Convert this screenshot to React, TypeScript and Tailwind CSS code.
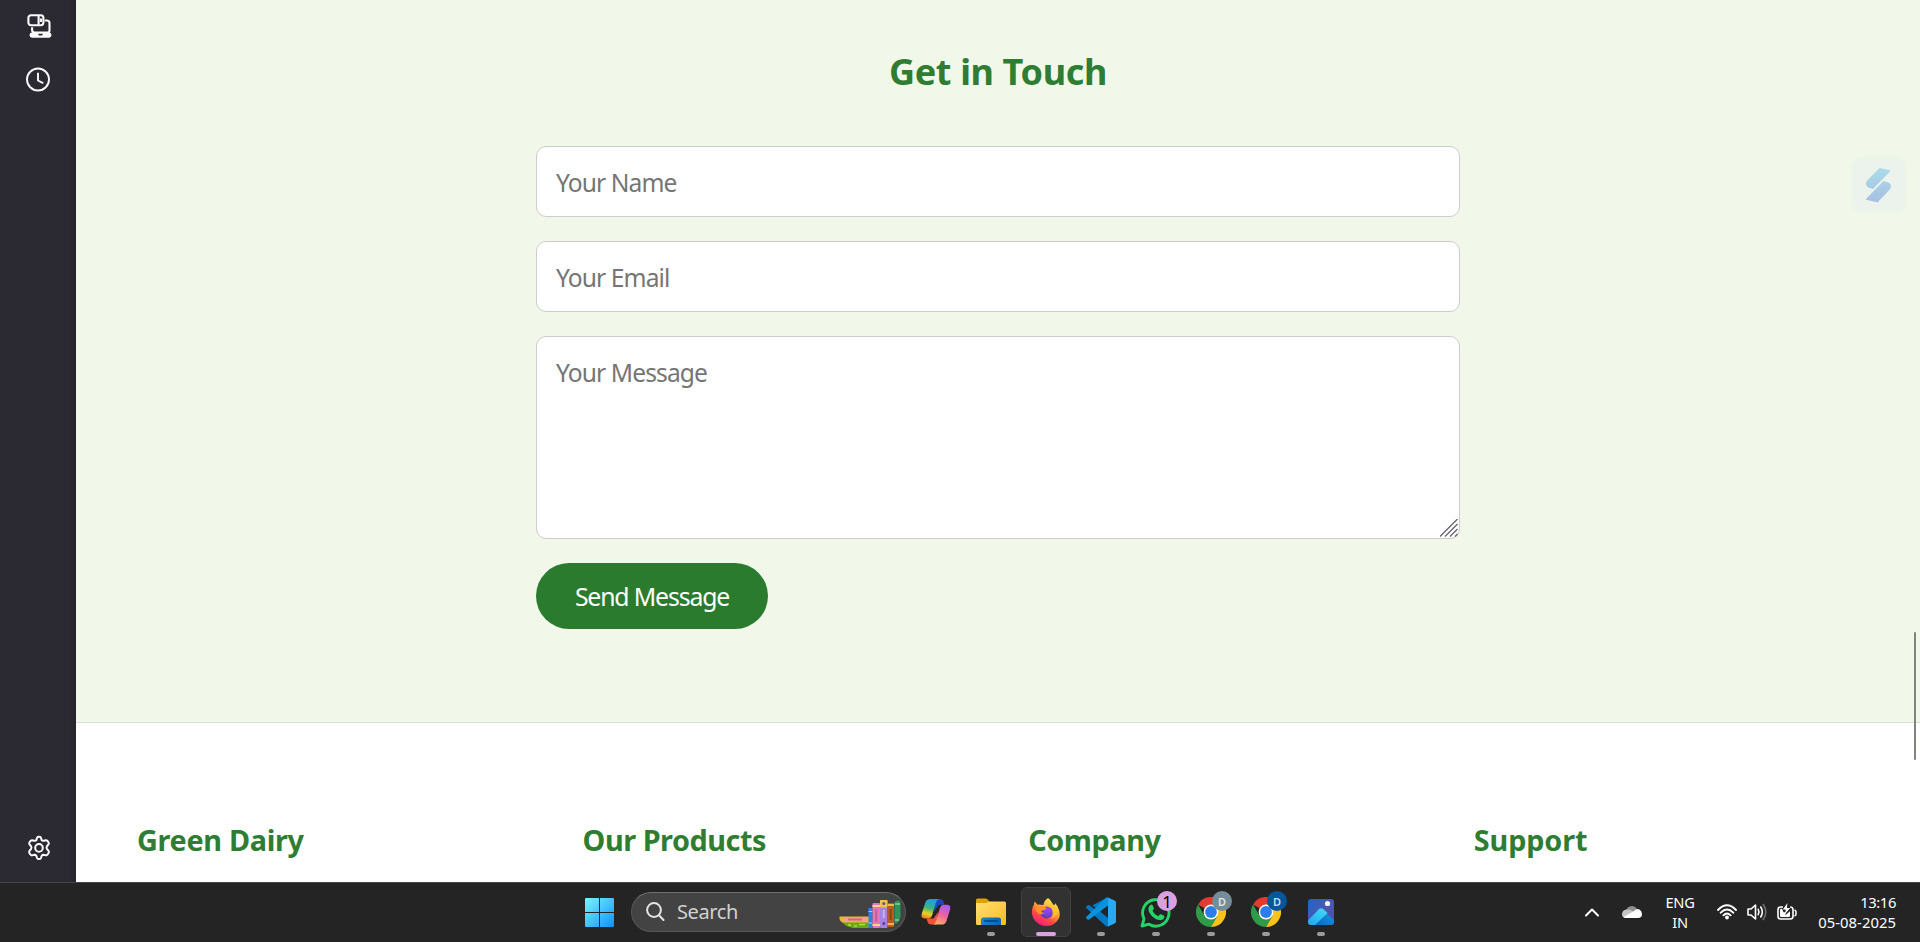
import React from "react";

const fieldBase =
  "block w-full rounded-[10px] border border-[#cccccc] bg-white px-[19px] text-[24.6px] tracking-[-0.9px] text-[#333] outline-none placeholder:text-[#757575] placeholder:opacity-100";

function DevicesIcon() {
  return (
    <svg width="26" height="26" viewBox="0 0 26 26" fill="none" stroke="#fbfbfe" strokeWidth="2.1">
      <rect x="2.4" y="2.2" width="15" height="10" rx="2.6" />
      <path d="M12.6 2v9.8M15 5.500v3.500" />
      <path d="M18.800 7.500h2.300a2.400 2.400 0 0 1 2.400 2.400v7.600a2 2 0 0 1-2 2H8.400a2.400 2.400 0 0 1-2.300-2.400v-2.900" />
      <rect x="3.600" y="19.500" width="21.800" height="5.200" rx="2.400" fill="#fbfbfe" stroke="none" />
      <path d="M12 20.700h5l-1 1.700h-3z" fill="#2b2a33" stroke="none" />
    </svg>
  );
}

function ClockIcon() {
  return (
    <svg width="26" height="26" viewBox="0 0 26 26" fill="none" stroke="#fbfbfe" strokeWidth="1.9" strokeLinecap="round" strokeLinejoin="round">
      <circle cx="13" cy="13.500" r="11" />
      <path d="M13 7.500v7l4.600 2.300" />
    </svg>
  );
}

function GearIcon() {
  return (
    <svg width="26" height="26" viewBox="0 0 26 26" fill="none" stroke="#fbfbfe" strokeWidth="2" strokeLinejoin="round">
      <path d="M11.1 2.7Q11.5 1.8 13 1.8T14.9 2.7L15.7 5.1Q16.4 6 17.7 5.7L20 5.2Q21.2 5.1 22.2 6.7T22.6 9.1L20.9 11.3Q20.2 12.5 20.9 13.8L22.8 16.2Q23.2 17.2 22.2 18.8T20 20.4L17.6 19.8Q16.4 19.7 15.7 20.7L14.9 23.1Q14.4 24.1 13 24.1T11.1 23.1L10.3 20.7Q9.6 19.7 8.4 19.8L6 20.4Q4.8 20.4 3.8 18.8T3.3 16.2L5.1 13.8Q5.8 12.5 5.1 11.3L3.4 9.1Q2.8 8.2 3.8 6.7T6 5.2L8.3 5.7Q9.6 6 10.3 5.1Z" />
      <circle cx="13" cy="12.9" r="3.8" />
    </svg>
  );
}

function WindowsLogo() {
  return (
    <svg width="29" height="29" viewBox="0 0 29 29">
      <defs>
        <linearGradient id="win" x1="0" y1="0" x2="1" y2="1">
          <stop offset="0" stopColor="#7df2ff" />
          <stop offset="1" stopColor="#0a94ff" />
        </linearGradient>
      </defs>
      <path fill="url(#win)" d="M1 0h13v14H0V1a1 1 0 0 1 1-1zM15 0h13a1 1 0 0 1 1 1v13H15zM0 15h14v14H1a1 1 0 0 1-1-1zM15 15h14v13a1 1 0 0 1-1 1H15z" />
    </svg>
  );
}

function BooksArt() {
  return (
    <svg width="62" height="30" viewBox="0 0 62 30">
      <path d="M.5 17.500H30V24H4Q0 22 .5 17.500z" fill="#e9b73e" />
      <rect x="5.500" y="18" width="22" height="5" rx="1.500" fill="#f39d95" />
      <rect x="9" y="19.500" width="14" height="2" fill="#c9706b" />
      <path d="M3.500 23.500H30V29H14Q6 27.500 3.500 23.500z" fill="#6aa81a" />
      <path d="M9 26h3m3 1h3m2-1.500h6" stroke="#b4db3c" strokeWidth="1.500" fill="none" />
      <rect x="29.500" y="9" width="4" height="20" fill="#2f7fe6" />
      <path d="M29.500 12.500h4M29.500 24h4" stroke="#9fd0ff" />
      <rect x="33.500" y="4" width="7.500" height="25" rx="1" fill="#e277b4" />
      <path d="M33.500 7h7.500M33.500 26h7.500" stroke="#f5d890" strokeWidth="2" />
      <path d="M37.200 10.500v12" stroke="#c25c9b" strokeWidth="2" />
      <rect x="41" y="1" width="7.500" height="28" rx="1" fill="#a583e3" />
      <rect x="41" y="1" width="7.500" height="7.500" rx="1" fill="#f2c344" />
      <circle cx="44.800" cy="4.500" r="1.500" fill="#6c46ad" />
      <path d="M43 24.500l1.800-2 1.800 2-1.800 2z" fill="#5e3aa3" />
      <path d="M44.800 11v8" stroke="#c9b0f5" strokeWidth="2" />
      <rect x="48.500" y="4" width="6.500" height="24" rx="1" fill="#b85c26" />
      <path d="M48.500 6h6.500M48.500 25h6.500" stroke="#efb850" strokeWidth="2" />
      <path d="M51.700 10v11" stroke="#8f411b" strokeWidth="2" />
      <path d="M55.500 3q5-3.500 6 1v14q-1 4-4 6.500h-2z" fill="#2f9556" />
      <path d="M56 5h5M56 21h4" stroke="#85d399" strokeWidth="1.500" />
    </svg>
  );
}

function CopilotIcon() {
  return (
    <svg width="30" height="28" viewBox="0 0 30 28">
      <defs>
        <linearGradient id="cpA" x1="0.5" y1="0" x2="0.25" y2="1">
          <stop offset="0" stopColor="#1a9df0" />
          <stop offset=".45" stopColor="#3fb37a" />
          <stop offset=".75" stopColor="#e8d221" />
          <stop offset="1" stopColor="#f47a24" />
        </linearGradient>
        <linearGradient id="cpB" x1="0.7" y1="0" x2="0.3" y2="1">
          <stop offset="0" stopColor="#a95cf0" />
          <stop offset=".5" stopColor="#ee629f" />
          <stop offset="1" stopColor="#ffad62" />
        </linearGradient>
      </defs>
      <path d="M15 1h4.500q2.200 0 3 2.400l1 3.300H18l-5 7z" fill="#1749c4" />
      <path d="M15 26.500h-5q-2.600 0-3.400-2.500l-1-3.600h7L17 14z" fill="#f5503e" />
      <path d="M9.500 1H18q-2 .4-2.800 3l-4 13q-1 3.400-4 3.400H4q-4.600 0-3.200-5L4.300 4.600Q5.500 1 9.500 1z" fill="url(#cpA)" />
      <path d="M20.500 26.500H12q2-.4 2.800-3l4-13q1-3.800 4-3.800h3q4.600 0 3.200 5l-3.500 11.200q-1.200 3.600-5 3.600z" fill="url(#cpB)" />
    </svg>
  );
}

function FolderIcon() {
  return (
    <svg width="30" height="28" viewBox="0 0 30 28">
      <defs>
        <linearGradient id="fold" x1="0" y1="0" x2="1" y2="1">
          <stop offset="0" stopColor="#ffdf75" />
          <stop offset="1" stopColor="#fcbb20" />
        </linearGradient>
        <linearGradient id="tray" x1="0" y1="0" x2="1" y2="0">
          <stop offset="0" stopColor="#1685d5" />
          <stop offset="1" stopColor="#0a65b4" />
        </linearGradient>
      </defs>
      <path d="M0 2q0-1.500 1.500-1.500h8q1 0 1.800.7L13.500 3.500V7H0z" fill="#dea008" />
      <path d="M0 5h10l3.500-1.500h15q1.500 0 1.500 1.500v20.500q0 1.500-1.500 1.500h-27Q0 27 0 25.500z" fill="url(#fold)" />
      <path d="M5 27v-5q0-2.500 2.500-2.500h15Q25 19.500 25 22v5z" fill="url(#tray)" />
      <path d="M8.500 23h13" stroke="#063f78" strokeWidth="1.300" strokeLinecap="round" />
    </svg>
  );
}

function FirefoxIcon() {
  return (
    <svg width="30" height="30" viewBox="0 0 30 30">
      <defs>
        <linearGradient id="ffA" x1=".8" y1="0" x2=".25" y2="1">
          <stop offset="0" stopColor="#fff44f" />
          <stop offset=".4" stopColor="#ffb02e" />
          <stop offset=".68" stopColor="#ff4b43" />
          <stop offset="1" stopColor="#ee1586" />
        </linearGradient>
        <radialGradient id="ffB" cx=".6" cy=".3" r=".8">
          <stop offset="0" stopColor="#a445ee" />
          <stop offset="1" stopColor="#493bc2" />
        </radialGradient>
      </defs>
      <path d="M17 1q3 2 4.500 5.500 1 1.700 1.700 1.500Q24.500 7.500 24 6q3 3 4.200 7.400Q30 20 25.500 24.800 21 29.500 14.400 29 7.500 28.500 3.500 23 .2 18.200 1 13q.5-3.300 2-5.500Q3 6 3.800 4.600L6.500 7.800q1.500-.6 3.300-.1 1.600.4 2.600.4Q13 3.500 17 1z" fill="url(#ffA)" />
      <circle cx="15.500" cy="15.500" r="6.100" fill="url(#ffB)" />
      <path d="M4.500 10.500q3.500-3 8.500-.8l2.500 1.500q-.7 2-3 2.100-2.300.3-2.500 1.500 1.500 1.600 4 .7-2.500 2.600-6 1.300Q4.700 15 4.500 10.500z" fill="#ff9428" />
      <path d="M16 8.500q7 1 6.500 8.500 0 3-3 5 6-1.500 6.300-7.500Q24.500 8.500 19 7z" fill="#ffc52f" opacity=".8" />
    </svg>
  );
}

function VsCodeIcon() {
  return (
    <svg width="30" height="30" viewBox="0 0 30 30">
      <path d="M21.800.3 8.700 12.300 3.300 8.200q-.9-.6-1.700.1L.5 9.600q-.8.8 0 1.700L19.500 28.800q1.100 1.200 2.700.5L22 21 6.500 8.200z" fill="#0079c5" />
      <path d="M22 .4v8.200L3.300 22.500q-.9.700-1.800 0L.4 21.300q-.8-.9 0-1.600L19.700 1Q20.800-.1 22 .4z" fill="#0893dc" />
      <path d="M22 .4 28.600 3.500Q30 4.200 30 5.600v18.800q0 1.500-1.400 2.100L22 29.600z" fill="#28a9f2" />
    </svg>
  );
}

function WhatsAppIcon() {
  return (
    <svg width="31" height="31" viewBox="0 0 31 31">
      <path d="M2 29l2-7.200A13.200 13.200 0 1 1 9 27.200z" fill="none" stroke="#25d366" strokeWidth="2.900" strokeLinejoin="round" />
      <path d="M10.500 8q.9-.9 2 .1l1.300 2.800q.3.800-.3 1.500l-1.100 1.300q2 4 5.900 5.500l1.500-1.700q.6-.6 1.400-.2l2.700 1.400q.9.500.4 1.700-1.100 3-4.700 2.700-4.400-.5-8-4.400-3.400-3.800-3.200-7.100.1-2.300 2.100-3.600z" fill="#25d366" />
    </svg>
  );
}

function ChromeIcon() {
  return (
    <svg width="30" height="30" viewBox="0 0 30 30">
      <path d="M15 15 2 7.500A15 15 0 0 1 28 7.500H15z" fill="#e33b2e" />
      <path d="M15 15 8.500 18.750 2 7.500A15 15 0 0 0 15 30l6.500-11.250z" fill="#2d9b47" />
      <path d="M15 7.500h13A15 15 0 0 1 15 30l6.500-11.250z" fill="#fcc21b" />
      <circle cx="15" cy="15" r="7.400" fill="#fff" />
      <circle cx="15" cy="15" r="5.900" fill="#2b7de9" />
    </svg>
  );
}

function PhotosIcon() {
  return (
    <svg width="26" height="26" viewBox="0 0 26 26">
      <defs>
        <linearGradient id="phA" x1="0" y1="0" x2="1" y2="1">
          <stop offset="0" stopColor="#1769ca" />
          <stop offset=".5" stopColor="#4e57ae" />
          <stop offset="1" stopColor="#4b4fa8" />
        </linearGradient>
        <linearGradient id="phB" x1="0" y1="1" x2="1" y2="0">
          <stop offset="0" stopColor="#1fa5ec" />
          <stop offset="1" stopColor="#44dcfb" />
        </linearGradient>
        <linearGradient id="phD" x1="0" y1="1" x2="1" y2="0">
          <stop offset="0" stopColor="#0868bd" />
          <stop offset="1" stopColor="#1c98e6" />
        </linearGradient>
        <clipPath id="phC"><rect width="26" height="26" rx="3" /></clipPath>
      </defs>
      <g clipPath="url(#phC)">
        <rect width="26" height="26" fill="url(#phA)" />
        <path d="M14 10 26 21v5H5z" fill="url(#phD)" />
        <path d="M0 21.500 10.800 10.300q2.300-2 4.600 0L19.500 14 7 26H0z" fill="url(#phB)" />
        <circle cx="19.500" cy="4.500" r="2.600" fill="#f4f5ff" />
      </g>
    </svg>
  );
}

function AppSlot({ children, running = true }: { children: React.ReactNode; running?: boolean }) {
  return (
    <div className="relative flex h-[50px] w-[55px] items-center justify-center">
      {children}
      {running && <span className="absolute bottom-[1px] left-[24px] h-1 w-2 rounded-full bg-[#9b9b9b]" />}
    </div>
  );
}

function Badge({ children, tone }: { children: string; tone: string }) {
  return (
    <span className={`absolute top-1 left-[29px] flex size-5 items-center justify-center rounded-full ${tone}`}>
      {children}
    </span>
  );
}

function Taskbar() {
  return (
    <footer className="flex h-[60px] shrink-0 items-start border-t border-[#454545] bg-[#242424] pt-1 text-white">
      <div className="ml-[585px] flex h-[50px] items-center">
        <WindowsLogo />
        <div className="mt-[-1px] ml-[17px] flex h-10 w-[275px] items-center rounded-full border border-[#575757] border-t-[#707070] bg-[#434343] pr-1 pl-[14px]">
          <svg width="19" height="20" viewBox="0 0 19 20" fill="none" stroke="#e4e4e4" strokeWidth="2" strokeLinecap="round">
            <circle cx="8" cy="8" r="6.900" />
            <path d="M13 13.300l4.500 4.700" />
          </svg>
          <span className="mt-px ml-3 text-[20px] leading-6 tracking-[-0.4px] text-[#d2d2d2]">Search</span>
          <span className="mt-1 ml-auto"><BooksArt /></span>
        </div>
        <div className="ml-[2px] flex">
          <AppSlot running={false}><CopilotIcon /></AppSlot>
          <AppSlot><FolderIcon /></AppSlot>
          <div className="relative mx-[2.5px] flex size-[50px] items-center justify-center rounded-[6px] border border-[#414141] bg-[#323232]">
            <FirefoxIcon />
            <span className="absolute bottom-0 left-[14px] h-1 w-5 rounded-full bg-[#dda0e4]" />
          </div>
          <AppSlot><VsCodeIcon /></AppSlot>
          <AppSlot><WhatsAppIcon /><Badge tone="bg-[#dba0e4] text-black text-[17px] leading-none">1</Badge></AppSlot>
          <AppSlot><ChromeIcon /><Badge tone="bg-[#758d99] text-[#dce4e8] text-[11px] font-semibold leading-none">D</Badge></AppSlot>
          <AppSlot><ChromeIcon /><Badge tone="bg-[#07559b] text-[#c5dcf0] text-[11px] font-semibold leading-none">D</Badge></AppSlot>
          <AppSlot><PhotosIcon /></AppSlot>
        </div>
      </div>
      <div className="mr-6 ml-auto flex h-[50px] items-center">
        <svg width="14" height="9" viewBox="0 0 14 9" fill="none" stroke="#fff" strokeWidth="2" strokeLinecap="round" strokeLinejoin="round"><path d="M1 7.500l6-6 6 6" /></svg>
        <svg className="ml-[23px]" width="20" height="14" viewBox="0 0 20 14">
          <path d="M4 6a6 6 0 0 1 11-2L10 9z" fill="#8f8f8f" />
          <path d="M4.500 4.500q3.200-.4 5 1L14 8l-8 5H4Q0 13 0 9.200 0 5.200 4.500 4.500z" fill="#c4c4c4" />
          <path d="M1.500 12 12 6q2.500-3 5.500-1.500Q20 6 20 9.200q0 3.800-4 3.800H4q-1.500 0-2.500-1z" fill="#fff" />
        </svg>
        <div className="ml-[23px] w-[30px] text-center text-[14.6px] leading-5 tracking-[-0.2px]">ENG<br />IN</div>
        <svg className="ml-[22px]" width="20" height="16" viewBox="0 0 20 16" fill="none" stroke="#fff" strokeWidth="1.900" strokeLinecap="round">
          <path d="M1 6Q10-3.500 19 6M3.700 8.700Q10 2.300 16.300 8.700M6.400 11.300Q10 7.700 13.600 11.300" />
          <circle cx="10" cy="13.500" r="1.900" fill="#fff" stroke="none" />
        </svg>
        <svg className="ml-[10px]" width="20" height="18" viewBox="0 0 20 18" fill="none" stroke="#fff" strokeWidth="1.600" strokeLinecap="round" strokeLinejoin="round">
          <path d="M1 6h3l4.500-4v14L4 12H1zM11.200 6.300q1.600 2.700 0 5.400M13.800 4q3 5 0 10" />
          <path d="M16.300 1.500q5 7.500 0 15" stroke="#707070" />
        </svg>
        <svg className="ml-[10px]" width="20" height="18" viewBox="0 0 20 18">
          <path d="M6 4H3.800Q1 4 1 6.800v6.400Q1 16 3.800 16h9.400q2.800 0 2.800-2.800V6.800Q16 4 13.200 4" fill="none" stroke="#fff" strokeWidth="1.600" />
          <path d="M3 7q0-1.200 1.200-1.200H5l1.500 3.500H9l-.7 3 4.700-4v4.500q0 1.200-1.200 1.200H4.200Q3 14 3 12.800z" fill="#fff" />
          <path d="M10.500 0 5.800 6.500h3L8 11l5.200-6h-3.400z" fill="#fff" />
          <path d="M17.500 7q1.500.4 1.500 2v2q0 1.600-1.500 2" fill="none" stroke="#fff" strokeWidth="1.500" />
        </svg>
        <div className="ml-5 w-[79px] text-right text-[14.8px] leading-5 whitespace-nowrap">
          <div className="tracking-[-0.4px]">13:16</div>
          <div className="tracking-[0.05px]">05-08-2025</div>
        </div>
      </div>
    </footer>
  );
}

export default function App() {
  return (
    <div className="relative flex h-[942px] w-[1920px] flex-col overflow-hidden bg-white font-['Noto_Sans','Open_Sans',sans-serif]">
      <div className="flex min-h-0 flex-1">
        <aside className="flex w-[76px] shrink-0 flex-col items-center bg-[linear-gradient(to_right,#2b2a33_0,#2b2a33_68px,#25242b_76px)] pt-[13px] pb-[21px]">
          <div className="pl-[2px]"><DevicesIcon /></div>
          <div className="mt-[27px]"><ClockIcon /></div>
          <div className="mt-auto pl-px"><GearIcon /></div>
        </aside>
        <main className="flex min-w-0 flex-1 flex-col">
          <section className="h-[722px] shrink-0 bg-[#f1f8e9] pt-12">
            <h2 className="text-center text-[36px] leading-[48px] font-bold tracking-[-0.35px] text-[#2e7d32]">Get in Touch</h2>
            <form className="mx-auto mt-[50px] flex w-[924px] flex-col gap-6">
              <input className={`${fieldBase} h-[71px] pt-[2px]`} placeholder="Your Name" />
              <input className={`${fieldBase} h-[71px] pt-[2px]`} placeholder="Your Email" />
              <div className="relative h-[203px]">
                <textarea className={`${fieldBase} h-[203px] resize-none pt-[18px] leading-[35px]`} placeholder="Your Message" />
                <svg className="absolute right-[2px] bottom-[2px]" width="18" height="18" viewBox="0 0 18 18" stroke="#66666b" strokeWidth="1.300">
                  <path d="M0 17.500 17.500 0M5 17.500 17.500 5M10 17.500 17.500 10M15 17.500 17.500 15" />
                </svg>
              </div>
              <button type="button" className="h-[66px] w-[232px] rounded-full bg-[#2a7b2e] pt-px text-[24.8px] tracking-[-1.15px] whitespace-nowrap text-white">Send Message</button>
            </form>
          </section>
          <section className="grid flex-1 grid-cols-[repeat(4,445.6px)] border-t border-[#dddddd] pt-[97px] pl-[61px] text-[28.8px] leading-[40px] font-bold text-[#2e7d32]">
            <h3 className="tracking-[-0.3px]">Green Dairy</h3>
            <h3 className="tracking-[-0.45px]">Our Products</h3>
            <h3 className="tracking-[-0.4px]">Company</h3>
            <h3 className="tracking-[-0.1px]">Support</h3>
          </section>
        </main>
      </div>
      <Taskbar />
      <div className="absolute top-[158px] left-[1852px] flex size-[53px] items-center justify-center rounded-[9px] bg-[#ebf3ec] shadow-[0_0_5px_#e9f2e8]">
        <svg width="27" height="36" viewBox="0 0 27 36">
          <defs>
            <linearGradient id="flash" x1="0" y1="0" x2="0" y2="1">
              <stop offset="0" stopColor="#a9dce9" />
              <stop offset="1" stopColor="#a9bfe3" />
            </linearGradient>
          </defs>
          <path d="M14.500 1 26 3.500 8 22Q.5 20.500 1 16.500q.2-2 1.500-3.300zM18.500 14Q26 15.500 26 19q0 2-1.500 3.800L12.500 35.500.5 32.500z" fill="url(#flash)" />
        </svg>
      </div>
      <div className="absolute top-[632px] left-[1914px] h-[128px] w-[2px] rounded-full bg-[#80847d]" />
    </div>
  );
}
